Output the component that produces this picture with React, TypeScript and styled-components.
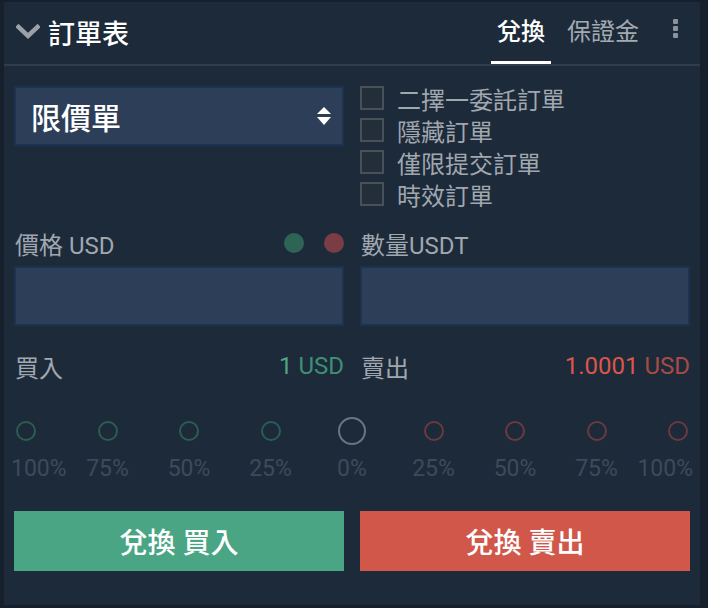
import React from "react";
import styled, { createGlobalStyle } from "styled-components";

const FONT = `Roboto, "Noto Sans CJK TC", "Noto Sans", sans-serif`;

const Global = createGlobalStyle`
  html, body { margin: 0; padding: 0; background: #16202c; }
  body { font-family: ${FONT}; padding: 2px 8px 3px 4px; }
  * { box-sizing: border-box; }
`;

const Panel = styled.div`
  width: 696px;
  height: 603px;
  background: #1d2a3a;
  display: flex;
  flex-direction: column;
`;

const Header = styled.div`
  height: 64px;
  border-bottom: 2px solid #303c49;
  display: flex;
  align-items: stretch;
  padding: 0 22px 0 12px;
`;

const TitleWrap = styled.div`
  display: flex;
  align-items: center;
  gap: 8px;
  flex: 1;
  padding-bottom: 2px;
`;

const Title = styled.span`
  color: #ffffff;
  font-size: 27px;
  font-weight: 500;
`;

const Tabs = styled.div`
  display: flex;
  align-items: stretch;
  gap: 10px;
`;

const Tab = styled.div<{ $active?: boolean }>`
  position: relative;
  display: flex;
  align-items: center;
  padding: 0 6px 8px;
  font-size: 24px;
  font-weight: ${(p) => (p.$active ? 500 : 400)};
  color: ${(p) => (p.$active ? "#ffffff" : "#a3aab2")};
  &::after {
    content: "";
    display: ${(p) => (p.$active ? "block" : "none")};
    position: absolute;
    left: 0;
    right: 0;
    bottom: 0;
    height: 3px;
    background: #ffffff;
  }
`;

const Dots = styled.div`
  display: flex;
  flex-direction: column;
  justify-content: center;
  gap: 2px;
  margin-left: 28px;
  padding-bottom: 10px;
  & > span {
    width: 5px;
    height: 5px;
    background: #8a939d;
    border-radius: 1px;
  }
`;

const Body = styled.div`
  padding: 20px 10px 0;
  display: flex;
  flex-direction: column;
`;

const Grid = styled.div<{ $mt?: number }>`
  display: grid;
  grid-template-columns: 1fr 1fr;
  column-gap: 16px;
  margin-top: ${(p) => p.$mt ?? 0}px;
`;

const Select = styled.div`
  height: 60px;
  background: #2d3f58;
  border: 2px solid #1b3250;
  display: flex;
  align-items: center;
  justify-content: space-between;
  padding: 0 10px 0 15px;
  color: #ffffff;
  font-size: 30px;
  font-weight: 500;
`;

const CheckList = styled.div`
  display: flex;
  flex-direction: column;
  gap: 8px;
`;

const CheckRow = styled.label`
  display: flex;
  align-items: center;
  gap: 13px;
  height: 24px;
  color: #a0a7af;
  font-size: 24px;
`;

const Box = styled.span`
  width: 24px;
  height: 24px;
  border: 2px solid #4a5058;
  background: #232e3b;
  flex-shrink: 0;
`;

const FieldHead = styled.div`
  display: flex;
  align-items: center;
  justify-content: space-between;
  height: 30px;
  padding-left: 1px;
  color: #a0a7af;
  font-size: 24px;
`;

const DotPair = styled.div`
  display: flex;
  gap: 20px;
`;

const Dot = styled.span<{ $c: string }>`
  width: 20px;
  height: 20px;
  border-radius: 50%;
  background: ${(p) => p.$c};
`;

const Input = styled.div`
  margin-top: 8px;
  height: 60px;
  background: #2d3f58;
  border: 2px solid #1b3250;
`;

const TotalRow = styled.div`
  display: flex;
  justify-content: space-between;
  align-items: center;
  height: 30px;
  padding-left: 1px;
  font-size: 24px;
  color: #a0a7af;
`;

const Amount = styled.span<{ $c: string; $u: string }>`
  color: ${(p) => p.$c};
  & > em {
    font-style: normal;
    color: ${(p) => p.$u};
  }
`;

const Slider = styled.div`
  margin-top: 36px;
  display: flex;
  justify-content: space-between;
  padding: 0 2px;
`;

const Stop = styled.div<{ $edge?: "left" | "right" }>`
  width: 20px;
  display: flex;
  flex-direction: column;
  align-items: ${(p) =>
    p.$edge === "left" ? "flex-start" : p.$edge === "right" ? "flex-end" : "center"};
`;

const Ring = styled.span<{ $c: string; $big?: boolean }>`
  width: ${(p) => (p.$big ? 28 : 20)}px;
  height: ${(p) => (p.$big ? 28 : 20)}px;
  margin-top: ${(p) => (p.$big ? 0 : 4)}px;
  margin-bottom: ${(p) => (p.$big ? 0 : 4)}px;
  align-self: center;
  flex-shrink: 0;
  border-radius: 50%;
  border: 2px solid ${(p) => p.$c};
`;

const StopLabel = styled.span<{ $edge?: "left" | "right" }>`
  margin-top: 10px;
  line-height: 28px;
  white-space: nowrap;
  font-size: 23px;
  color: #3e4a59;
  margin-left: ${(p) => (p.$edge === "left" ? "-5px" : "0")};
  margin-right: ${(p) => (p.$edge === "right" ? "-5px" : "0")};
`;

const Button = styled.button<{ $bg: string }>`
  height: 60px;
  border: none;
  background: ${(p) => p.$bg};
  color: #ffffff;
  font-family: ${FONT};
  font-size: 28px;
  font-weight: 500;
  cursor: pointer;
`;

const Chevron = () => (
  <svg width="24" height="16" viewBox="0 0 24 16">
    <path d="M2.5 3 L12 12 L21.5 3" fill="none" stroke="#9aa1a9" strokeWidth="4.5" strokeLinecap="square" />
  </svg>
);

const SortArrows = () => (
  <svg width="16" height="20" viewBox="0 0 16 20">
    <path d="M8 1 L15 8 L1 8 Z" fill="#ffffff" />
    <path d="M1 11 L15 11 L8 19 Z" fill="#ffffff" />
  </svg>
);

const stops = [
  { l: "100%", c: "#2b5d51", edge: "left" as const },
  { l: "75%", c: "#2b5d51" },
  { l: "50%", c: "#2b5d51" },
  { l: "25%", c: "#2b5d51" },
  { l: "0%", c: "#6b7580", big: true },
  { l: "25%", c: "#6b3a41" },
  { l: "50%", c: "#6b3a41" },
  { l: "75%", c: "#6b3a41" },
  { l: "100%", c: "#6b3a41", edge: "right" as const },
];

const checks = ["二擇一委託訂單", "隱藏訂單", "僅限提交訂單", "時效訂單"];

export default function App() {
  return (
    <>
      <Global />
      <Panel>
        <Header>
          <TitleWrap>
            <Chevron />
            <Title>訂單表</Title>
          </TitleWrap>
          <Tabs>
            <Tab $active>兌換</Tab>
            <Tab>保證金</Tab>
          </Tabs>
          <Dots>
            <span />
            <span />
            <span />
          </Dots>
        </Header>
        <Body>
          <Grid>
            <div>
              <Select>
                限價單
                <SortArrows />
              </Select>
            </div>
            <CheckList>
              {checks.map((c) => (
                <CheckRow key={c}>
                  <Box />
                  {c}
                </CheckRow>
              ))}
            </CheckList>
          </Grid>
          <Grid $mt={22}>
            <div>
              <FieldHead>
                價格 USD
                <DotPair>
                  <Dot $c="#2d6456" />
                  <Dot $c="#7a3d43" />
                </DotPair>
              </FieldHead>
              <Input />
            </div>
            <div>
              <FieldHead>數量USDT</FieldHead>
              <Input />
            </div>
          </Grid>
          <Grid $mt={25}>
            <TotalRow>
              買入
              <Amount $c="#4ea686" $u="#3f8f75">
                1 <em>USD</em>
              </Amount>
            </TotalRow>
            <TotalRow>
              賣出
              <Amount $c="#dc574a" $u="#a84a45">
                1.0001 <em>USD</em>
              </Amount>
            </TotalRow>
          </Grid>
          <Slider>
            {stops.map((s, i) => (
              <Stop key={i} $edge={s.edge}>
                <Ring $c={s.c} $big={s.big} />
                <StopLabel $edge={s.edge}>{s.l}</StopLabel>
              </Stop>
            ))}
          </Slider>
          <Grid $mt={28}>
            <Button $bg="#4aa585">兌換 買入</Button>
            <Button $bg="#d2574b">兌換 賣出</Button>
          </Grid>
        </Body>
      </Panel>
    </>
  );
}
